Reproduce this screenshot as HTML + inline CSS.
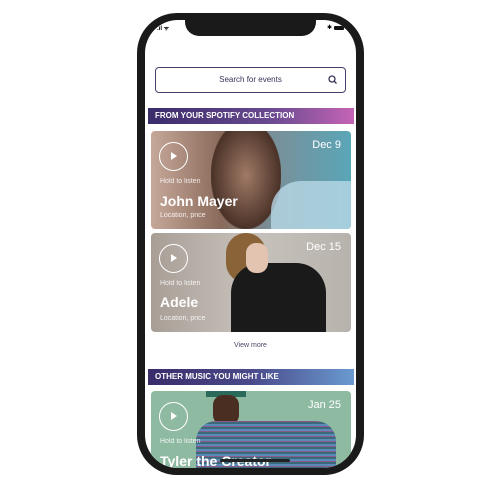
<!DOCTYPE html>
<html><head><style>
*{margin:0;padding:0;box-sizing:border-box}
body{width:500px;height:500px;background:#fff;position:relative;overflow:hidden;font-family:"Liberation Sans",sans-serif}
.phone{position:absolute;left:137px;top:13px;width:227px;height:462px;background:#1a1a1a;border-radius:40px}
.screen{position:absolute;left:145px;top:20px;width:211px;height:448px;background:#fff;border-radius:33px;overflow:hidden}
.notch{position:absolute;left:40px;top:0;width:131px;height:16px;background:#1a1a1a;border-radius:0 0 14px 14px}
.search{position:absolute;left:10px;top:47px;width:191px;height:26px;border:1.5px solid #4a3d6e;border-radius:4px;font-size:8px;color:#3a3358;text-align:center;line-height:23px}
.band{position:absolute;left:3px;width:206px;height:16px;color:#fff;font-weight:bold;font-size:8px;line-height:16px;padding-left:7px}
.card{position:absolute;left:6px;width:200px;border-radius:4px;overflow:hidden;color:#fff}
.play{position:absolute;left:8px;top:11px;width:29px;height:29px;border:1.5px solid #fff;border-radius:50%}
.play:after{content:"";position:absolute;left:11px;top:9px;border-left:6px solid #fff;border-top:4px solid transparent;border-bottom:4px solid transparent}
.h{position:absolute;left:9px;font-size:7px;opacity:.85}
.n{position:absolute;left:9px;font-size:14px;font-weight:bold}
.l{position:absolute;left:9px;font-size:7px;opacity:.85}
.d{position:absolute;right:10px;top:8px;font-size:11px}
</style></head><body>
<div class="phone"></div>
<div class="screen">
<div class="notch"></div>
<div style="position:absolute;left:12px;top:4px;font-size:6px;font-weight:bold">.ıl ᯤ</div>
<div style="position:absolute;right:24px;top:4px;font-size:6px">✱</div>
<div style="position:absolute;right:12px;top:6px;width:10px;height:4px;background:#111;border-radius:1px"></div>
<div class="search">Search for events<svg style="position:absolute;right:8px;top:7px" width="9" height="9" viewBox="0 0 9 9"><circle cx="4" cy="4" r="3" fill="none" stroke="#3a3358" stroke-width="1.3"/><path d="M6 6L8.5 8.5" stroke="#3a3358" stroke-width="1.3"/></svg></div>
<div class="band" style="top:88px;background:linear-gradient(90deg,#3b2c6a,#6a4a90 60%,#c564b6)">FROM YOUR SPOTIFY COLLECTION</div>
<div class="card" style="top:111px;height:98px;background:linear-gradient(90deg,#c6a89a 0%,#8a6a5a 35%,#7a8f98 60%,#5aa6b8 100%)">
<div style="position:absolute;left:60px;top:0;width:70px;height:98px;background:radial-gradient(ellipse at 50% 45%,#a07a66,#4a3228 70%,transparent 72%)"></div>
<div style="position:absolute;left:120px;top:50px;width:80px;height:48px;background:#b8d8e6;border-radius:30px 0 0 0;opacity:.8"></div>
<div class="play"></div><div class="h" style="top:47px">Hold to listen</div><div class="n" style="top:62px">John Mayer</div><div class="l" style="top:81px">Location, price</div><div class="d">Dec 9</div></div>
<div class="card" style="top:213px;height:99px;background:linear-gradient(90deg,#a89e96,#c8c2bc 50%,#b8b2ac)">
<div style="position:absolute;left:75px;top:0;width:40px;height:50px;background:#8a6438;border-radius:20px"></div>
<div style="position:absolute;left:80px;top:30px;width:95px;height:69px;background:#1a1a1a;border-radius:30px 30px 0 0"></div>
<div style="position:absolute;left:95px;top:10px;width:22px;height:30px;background:#e2c4b0;border-radius:10px"></div>
<div class="play"></div><div class="h" style="top:47px">Hold to listen</div><div class="n" style="top:61px">Adele</div><div class="l" style="top:82px">Location, price</div><div class="d">Dec 15</div></div>
<div style="position:absolute;left:0;width:211px;top:322px;text-align:center;font-size:7px;color:#4a4668">View more</div>
<div class="band" style="top:349px;background:linear-gradient(90deg,#3b2c6a,#4a4a8a 50%,#6a9ad0)">OTHER MUSIC YOU MIGHT LIKE</div>
<div class="card" style="top:371px;height:90px;background:#8fbaa2">
<div style="position:absolute;left:55px;top:0;width:40px;height:6px;background:#2a6a5a"></div>
<div style="position:absolute;left:62px;top:4px;width:26px;height:30px;background:#4a2e22;border-radius:10px"></div>
<div style="position:absolute;left:45px;top:30px;width:140px;height:60px;background:repeating-linear-gradient(0deg,#5a8ab8 0 2px,#3a6a7a 2px 4px,#8a5a8a 4px 5px);border-radius:20px 20px 0 0"></div>
<div class="play"></div><div class="h" style="top:47px">Hold to listen</div><div class="n" style="top:62px">Tyler the Creator</div><div class="d">Jan 25</div></div>
<div style="position:absolute;left:75px;top:439px;width:70px;height:3px;background:#222;border-radius:2px"></div>
</div>
</body></html>
